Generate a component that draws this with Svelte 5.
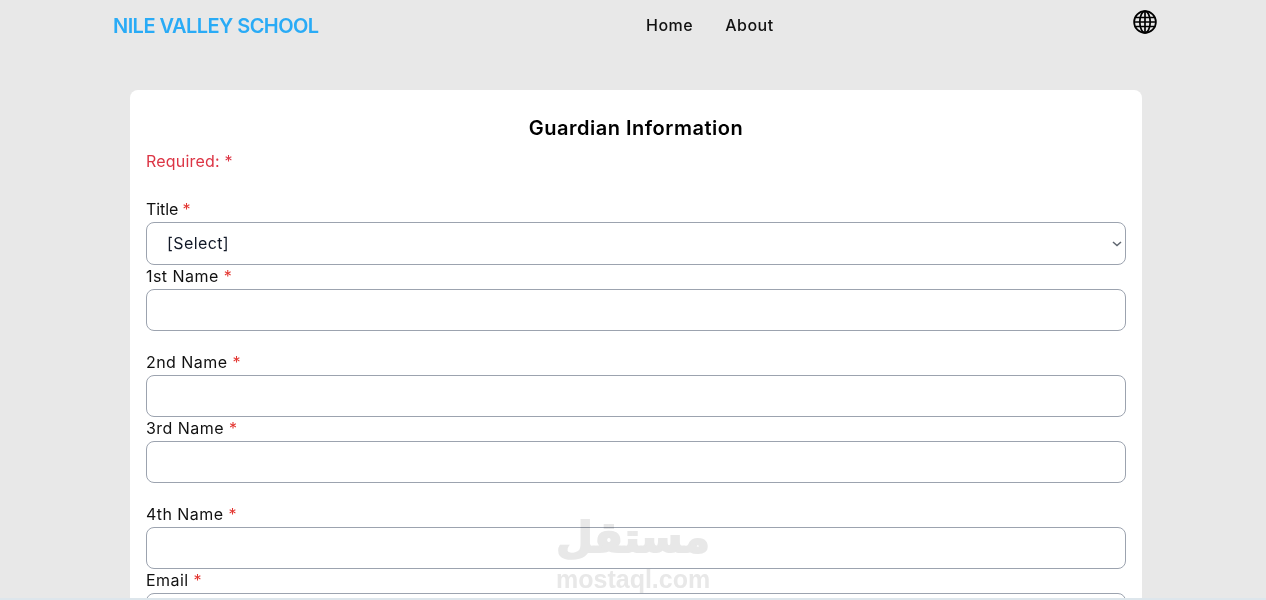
<script>
  const fields = [
    { label: '1st Name', gap: true },
    { label: '2nd Name', gap: false },
    { label: '3rd Name', gap: true },
    { label: '4th Name', gap: false },
    { label: 'Email', gap: false }
  ];
</script>

<div class="page">
  <nav class="nav">
    <a class="logo" href="#top">NILE VALLEY SCHOOL</a>
    <div class="links">
      <a href="#home">Home</a>
      <a href="#about">About</a>
    </div>
    <button class="globe" aria-label="Language">
      <svg viewBox="0 0 24 24" width="24" height="24" fill="none" stroke="#000" stroke-width="1.7">
        <circle cx="12" cy="12" r="10.9" />
        <ellipse cx="12" cy="12" rx="5.2" ry="10.9" />
        <path d="M12 1v22M1.9 7.5h20.2M1.1 12h21.8M1.9 16.5h20.2" />
      </svg>
    </button>
  </nav>

  <main class="card">
    <h1>Guardian Information</h1>
    <p class="required">Required: *</p>
    <form>
      <div class="field">
        <label class="tight" for="title">Title <span>*</span></label>
        <div class="select">
          <select id="title"><option>[Select]</option></select>
          <svg class="chev" viewBox="0 0 10 6" width="10" height="6" fill="none" stroke="#5f6670" stroke-width="1.5">
            <path d="M1 1l4 3.6L9 1" />
          </svg>
        </div>
      </div>
      {#each fields as f}
        <div class="field" class:gap={f.gap}>
          <label for={f.label}>{f.label} <span>*</span></label>
          <input id={f.label} type="text" />
        </div>
      {/each}
    </form>
  </main>

  <div class="strip"></div>
  <div class="mark" aria-hidden="true">
    <div class="ar" dir="rtl" lang="ar">مستقل</div>
    <div class="en">mostaql.com</div>
  </div>
</div>

<style>
  :global(body) {
    margin: 0;
    background: #e8e8e8;
  }
  .page {
    position: relative;
    height: 100vh;
    overflow: hidden;
    background: #e8e8e8;
    font-family: Inter, "Liberation Sans", sans-serif;
    color: #000;
  }
  .nav {
    display: flex;
    align-items: flex-start;
    height: 50px;
    padding: 0 109px 0 113px;
  }
  .logo {
    margin-top: 12px;
    font-size: 20px;
    line-height: 28px;
    font-weight: 600;
    letter-spacing: -0.55px;
    color: #29abf6;
    text-decoration: none;
    width: 205px;
    white-space: nowrap;
  }
  .links {
    display: flex;
    gap: 32px;
    margin-left: 328px;
    margin-top: 13px;
  }
  .links a {
    font-size: 16px;
    line-height: 24px;
    font-weight: 500;
    letter-spacing: 0.5px;
    color: #111;
    text-decoration: none;
  }
  .globe {
    margin: 10px 0 0 auto;
    padding: 0;
    border: 0;
    background: none;
    width: 24px;
    height: 24px;
    display: block;
  }
  .globe svg { display: block; }
  .card {
    box-sizing: border-box;
    width: 1012px;
    margin: 40px 0 0 130px;
    padding: 24px 16px 16px;
    background: #fff;
    border-radius: 8px;
  }
  h1 {
    margin: 0;
    text-align: center;
    font-size: 20px;
    line-height: 28px;
    font-weight: 600;
    letter-spacing: 0.5px;
  }
  .required {
    margin: 7px 0 0;
    font-size: 16px;
    line-height: 24px;
    letter-spacing: 0.2px;
    color: #dc3545;
  }
  form { margin-top: 25px; }
  label {
    display: block;
    font-size: 16px;
    line-height: 22px;
    padding-bottom: 2px;
    letter-spacing: 0.45px;
    color: #111;
  }
  label.tight { letter-spacing: -0.1px; }
  label span { color: #e3342f; }
  .field.gap { margin-bottom: 20px; }
  .select { position: relative; }
  select, input {
    display: block;
    box-sizing: border-box;
    width: 100%;
    border: 1px solid #9ca3af;
    border-radius: 8px;
    background: #fff;
    font: inherit;
    font-size: 16px;
    color: #111827;
  }
  select {
    height: 43px;
    padding: 0 20px 2px;
    letter-spacing: 0.4px;
    appearance: none;
  }
  input { height: 42px; padding: 0 16px; }
  .chev {
    position: absolute;
    right: 4px;
    top: 19px;
    pointer-events: none;
  }
  .strip {
    position: absolute;
    left: 0;
    right: 0;
    bottom: 0;
    height: 2px;
    background: #dde6ec;
  }
  .mark {
    position: absolute;
    left: 556px;
    top: 505px;
    width: 154px;
    text-align: center;
    color: #e8e8e8;
    mix-blend-mode: multiply;
    pointer-events: none;
    font-weight: 700;
    white-space: nowrap;
  }
  .ar {
    font-family: "DejaVu Sans", sans-serif;
    font-size: 42px;
    line-height: 62px;
    padding-top: 2px;
    margin-bottom: -2px;
    -webkit-text-stroke: 2px #e8e8e8;
  }
  .en {
    font-family: "Liberation Sans", sans-serif;
    font-size: 25px;
    line-height: 24px;
  }
</style>
